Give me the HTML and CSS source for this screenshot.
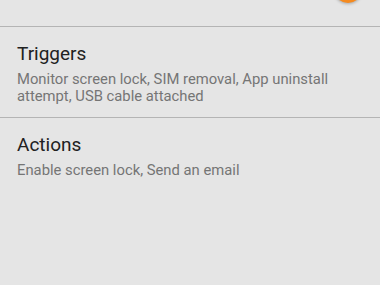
FILE: index.html
```html
<!DOCTYPE html>
<html>
<head>
<meta charset="utf-8">
<link rel="stylesheet" href="styles.css">
</head>
<body>
<div class="screen">
  <div class="top">
    <div class="fab"></div>
  </div>
  <div class="row">
    <div class="title">Triggers</div>
    <div class="sub">Monitor screen lock, SIM removal, App uninstall attempt, USB cable attached</div>
  </div>
  <div class="row">
    <div class="title">Actions</div>
    <div class="sub">Enable screen lock, Send an email</div>
  </div>
</div>
</body>
</html>
```

FILE: styles.css
```css
html, body {
  margin: 0;
  padding: 0;
  background: #e5e5e5;
}
.screen {
  width: 380px;
  height: 285px;
  overflow: hidden;
  font-family: Roboto, "Noto Sans", sans-serif;
  background: #e5e5e5;
}
.top {
  position: relative;
  height: 26px;
}
.fab {
  position: absolute;
  left: 334px;
  top: -25px;
  width: 28px;
  height: 28px;
  border-radius: 50%;
  background: #f58a1f;
  box-shadow: 0 1px 3px rgba(0,0,0,0.25);
}
.row {
  border-top: 1px solid #b4b4b4;
  padding: 15px 17px 12px;
  display: flex;
  flex-direction: column;
  gap: 5px;
}
.title {
  font-size: 19px;
  line-height: 24px;
  color: #212121;
}
.sub {
  font-size: 14.8px;
  line-height: 17px;
  color: #757575;
  width: 330px;
}
```
